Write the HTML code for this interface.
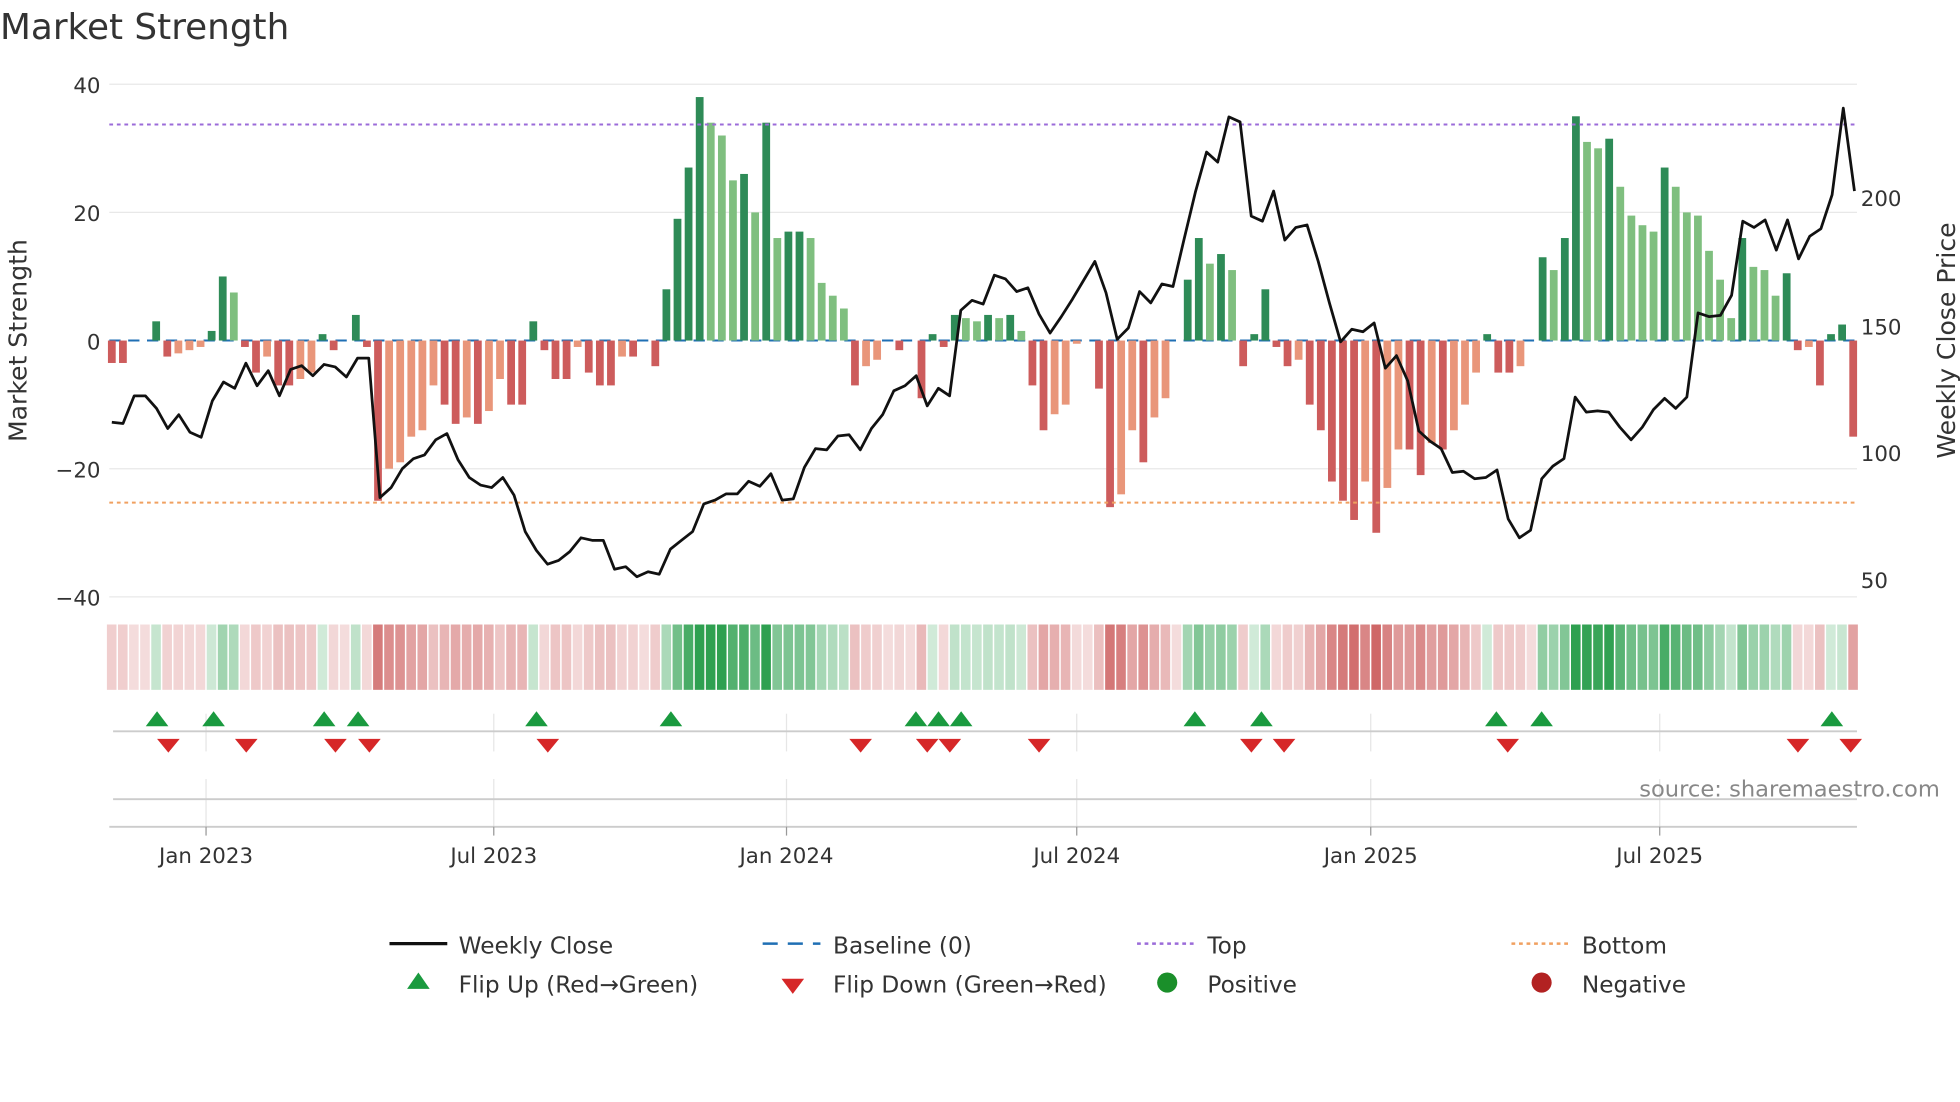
<!DOCTYPE html>
<html><head><meta charset="utf-8"><style>
html,body{margin:0;padding:0;background:#fff;}
svg{display:block;font-family:"DejaVu Sans","Liberation Sans",sans-serif;}
</style></head><body>
<svg id="s" width="1960" height="1102" viewBox="0 0 1560 877" xmlns="http://www.w3.org/2000/svg">
<text x="0" y="31" font-size="28.5" fill="#333">Market Strength</text>
<g id="grid" stroke="#e8e8e8" stroke-width="1">
<line x1="87" y1="67" x2="1478" y2="67"/><line x1="87" y1="169" x2="1478" y2="169"/>
<line x1="87" y1="373" x2="1478" y2="373"/><line x1="87" y1="475" x2="1478" y2="475"/>
</g>
<g font-size="17" fill="#333" text-anchor="end">
<text x="80" y="74">40</text><text x="80" y="176">20</text><text x="80" y="278">0</text>
<text x="80" y="380">−20</text><text x="80" y="482">−40</text>
</g>
<g font-size="17" fill="#333">
<text x="1481" y="164">200</text><text x="1481" y="266">150</text><text x="1481" y="367">100</text><text x="1481" y="468">50</text>
</g>
<text transform="translate(21,271) rotate(-90)" font-size="20" fill="#333" text-anchor="middle">Market Strength</text>
<text transform="translate(1556,271) rotate(-90)" font-size="20" fill="#333" text-anchor="middle">Weekly Close Price</text>
<line x1="87" y1="271" x2="1478" y2="271" stroke="#1f6fb4" stroke-width="1.6" stroke-dasharray="9,6"/>
<g id="bars"></g>
<line x1="87" y1="99" x2="1478" y2="99" stroke="#9b6bd9" stroke-width="1.6" stroke-dasharray="3,3"/>
<line x1="87" y1="400" x2="1478" y2="400" stroke="#f0a060" stroke-width="1.6" stroke-dasharray="3,3"/>
<polyline id="price" fill="none" stroke="#111" stroke-width="2.2" stroke-linejoin="round"/>
<g id="heat"></g>
<g stroke="#e6e6e6" stroke-width="1">
<line x1="164" y1="568" x2="164" y2="598"/><line x1="393" y1="568" x2="393" y2="598"/><line x1="626" y1="568" x2="626" y2="598"/><line x1="857" y1="568" x2="857" y2="598"/><line x1="1091" y1="568" x2="1091" y2="598"/><line x1="1321" y1="568" x2="1321" y2="598"/>
<line x1="164" y1="620" x2="164" y2="658"/><line x1="393" y1="620" x2="393" y2="658"/><line x1="626" y1="620" x2="626" y2="658"/><line x1="857" y1="620" x2="857" y2="658"/><line x1="1091" y1="620" x2="1091" y2="658"/><line x1="1321" y1="620" x2="1321" y2="658"/>
</g>
<line x1="90" y1="582" x2="1478" y2="582" stroke="#ccc" stroke-width="1.5"/>
<line x1="90" y1="636" x2="1478" y2="636" stroke="#ccc" stroke-width="1.5"/>
<line x1="87" y1="658" x2="1478" y2="658" stroke="#ccc" stroke-width="1.5"/>
<g id="flips"></g>
<text x="1544" y="634" font-size="18" fill="#888" text-anchor="end">source: sharemaestro.com</text>
<g stroke="#999" stroke-width="1"><line x1="164" y1="658" x2="164" y2="665"/><line x1="393" y1="658" x2="393" y2="665"/><line x1="626" y1="658" x2="626" y2="665"/><line x1="857" y1="658" x2="857" y2="665"/><line x1="1091" y1="658" x2="1091" y2="665"/><line x1="1321" y1="658" x2="1321" y2="665"/></g>
<g font-size="17" fill="#333" text-anchor="middle">
<text x="164" y="687">Jan 2023</text><text x="393" y="687">Jul 2023</text><text x="626" y="687">Jan 2024</text><text x="857" y="687">Jul 2024</text><text x="1091" y="687">Jan 2025</text><text x="1321" y="687">Jul 2025</text>
</g>
<g font-size="18.5" fill="#333">
<line x1="310" y1="751" x2="356" y2="751" stroke="#111" stroke-width="2.5"/><text x="365" y="759">Weekly Close</text>
<line x1="607" y1="751" x2="653" y2="751" stroke="#1f6fb4" stroke-width="2" stroke-dasharray="12,8"/><text x="663" y="759">Baseline (0)</text>
<line x1="905" y1="751" x2="951" y2="751" stroke="#9b6bd9" stroke-width="2" stroke-dasharray="3,3"/><text x="961" y="759">Top</text>
<line x1="1203" y1="751" x2="1249" y2="751" stroke="#f0a060" stroke-width="2" stroke-dasharray="3,3"/><text x="1259" y="759">Bottom</text>
<polygon points="324,787 342,787 333,774" fill="#1a9a3f"/><text x="365" y="790">Flip Up (Red→Green)</text>
<polygon points="622,779 640,779 631,791" fill="#d62728"/><text x="663" y="790">Flip Down (Green→Red)</text>
<circle cx="929" cy="782" r="8" fill="#1a8f2a"/><text x="961" y="790">Positive</text>
<circle cx="1227" cy="782" r="8" fill="#b22222"/><text x="1259" y="790">Negative</text>
</g>
</svg>
<script>
var v=[-3.5,-3.5,0,0,3,-2.5,-2,-1.5,-1,1.5,10,7.5,-1,-5,-2.5,-7,-7,-6,-5,1,-1.5,0,4,-1,-25,-20,-19,-15,-14,-7,-10,-13,-12,-13,-11,-6,-10,-10,3,-1.5,-6,-6,-1,-5,-7,-7,-2.5,-2.5,0,-4,8,19,27,38,34,32,25,26,20,34,16,17,17,16,9,7,5,-7,-4,-3,0,-1.5,0,-9,1,-1,4,3.5,3,4,3.5,4,1.5,-7,-14,-11.5,-10,-0.5,0,-7.5,-26,-24,-14,-19,-12,-9,0,9.5,16,12,13.5,11,-4,1,8,-1,-4,-3,-10,-14,-22,-25,-28,-22,-30,-23,-17,-17,-21,-16,-17,-14,-10,-5,1,-5,-5,-4,0,13,11,16,35,31,30,31.5,24,19.5,18,17,27,24,20,19.5,14,9.5,3.5,16,11.5,11,7,10.5,-1.5,-1,-7,1,2.5,-15];
var n=v.length,x0=89,x1=1475,dx=(x1-x0)/(n-1),bw=dx*0.7,B='',H='';
for(var i=0;i<n;i++){var x=x0+i*dx,val=v[i],p=i?v[i-1]:0,c;
if(val>0)c=(val>=p)?'#2e8b57':'#7fbf7f';else if(val<0)c=(val<=p)?'#cd5c5c':'#e9967a';
if(val!=0){var h=Math.abs(val)*5.1;B+='<rect x="'+(x-bw/2)+'" y="'+(val>0?271-h:271)+'" width="'+bw+'" height="'+h+'" fill="'+c+'"/>';}
var a=Math.min(1,0.2+Math.abs(val)/40),hc=val>0?'rgba(46,160,80,'+a+')':'rgba(200,80,80,'+(0.2+Math.abs(val)/45)+')';
H+='<rect x="'+(x-dx/2+0.5)+'" y="497" width="'+(dx-1.2)+'" height="52" fill="'+hc+'"/>';}
document.getElementById('bars').innerHTML=B;document.getElementById('heat').innerHTML=H;
var py=[336,337,315,315,325,341,330,344,348,319,304,309,289,307,295,315,294,291,299,290,292,300,285,285,396,388,373,365,362,350,345,366,380,386,388,380,394,423,438,449,446,439,428,430,430,453,451,459,455,457,437,430,423,401,398,393,393,383,387,377,398,397,372,357,358,347,346,358,341,330,311,307,299,323,309,315,247,239,242,219,222,232,229,250,265,252,238,223,208,233,270,261,232,241,226,228,190,153,121,129,93,97,172,176,152,191,181,179,208,241,272,262,264,257,293,283,303,343,351,357,376,375,381,380,374,413,428,422,381,371,365,316,328,327,328,340,350,340,326,317,325,316,249,252,251,235,176,181,175,199,175,206,188,182,155,86,152];
var pts=[],pdx=(1476-89)/(py.length-1);for(var j=0;j<py.length;j++)pts.push((89+j*pdx).toFixed(1)+','+py[j]);
document.getElementById('price').setAttribute('points',pts.join(' '));
var up=[125,170,258,285,427,534,729,747,765,951,1004,1191,1227,1458],dn=[134,196,267,294,436,685,738,756,827,996,1022,1200,1431,1473],F='';
up.forEach(function(x){F+='<polygon points="'+(x-9)+',578 '+(x+9)+',578 '+x+',566" fill="#1a9a3f"/>';});
dn.forEach(function(x){F+='<polygon points="'+(x-9)+',588 '+(x+9)+',588 '+x+',599" fill="#d62728"/>';});
document.getElementById('flips').innerHTML=F;
</script>
</body></html>
